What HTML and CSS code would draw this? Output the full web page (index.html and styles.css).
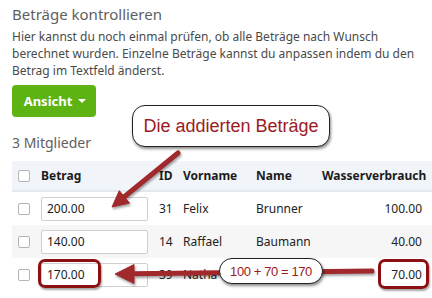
FILE: index.html
```html
<!DOCTYPE html>
<html lang="de">
<head>
    <meta charset="UTF-8">
    <title>Beträge kontrollieren</title>
    <link rel="stylesheet" href="styles.css">
</head>
<body>
    <div class="page">
        <h2 class="title">Beträge kontrollieren</h2>
        <p class="intro">Hier kannst du noch einmal prüfen, ob alle Beträge nach Wunsch berechnet wurden. Einzelne Beträge kannst du anpassen indem du den Betrag im Textfeld änderst.</p>
        <button class="view">Ansicht <span class="caret"></span></button>
        <h3 class="count">3 Mitglieder</h3>

        <table class="members">
            <colgroup>
                <col class="c-check">
                <col class="c-amount">
                <col class="c-id">
                <col class="c-first">
                <col class="c-last">
                <col class="c-water">
            </colgroup>
            <thead>
                <tr>
                    <th><span class="check"></span></th>
                    <th>Betrag</th>
                    <th>ID</th>
                    <th>Vorname</th>
                    <th>Name</th>
                    <th>Wasserverbrauch</th>
                </tr>
            </thead>
            <tbody>
                <tr>
                    <td><span class="check"></span></td>
                    <td><input class="amount" type="text" value="200.00"></td>
                    <td>31</td>
                    <td>Felix</td>
                    <td>Brunner</td>
                    <td class="num">100.00</td>
                </tr>
                <tr>
                    <td><span class="check"></span></td>
                    <td><input class="amount" type="text" value="140.00"></td>
                    <td>14</td>
                    <td>Raffael</td>
                    <td>Baumann</td>
                    <td class="num">40.00</td>
                </tr>
                <tr>
                    <td><span class="check"></span></td>
                    <td><input class="amount" type="text" value="170.00"></td>
                    <td>39</td>
                    <td>Natha</td>
                    <td></td>
                    <td class="num">70.00</td>
                </tr>
            </tbody>
        </table>
    </div>

    <!-- annotations drawn on top of the screenshot -->
    <svg class="arrows" width="432" height="298" viewBox="0 0 432 298">
        <g fill="#a1292b" stroke="#a1292b">
            <line x1="178" y1="153" x2="124" y2="197" stroke-width="5" stroke-linecap="round"/>
            <polygon points="112,207 129.5,203.1 119.3,190.7" stroke-width="1" stroke-linejoin="round"/>
            <line x1="372" y1="271" x2="132" y2="273.8" stroke-width="5" stroke-linecap="round"/>
            <polygon points="115,274 134,264.5 134,283.5" stroke-width="1" stroke-linejoin="round"/>
        </g>
    </svg>
    <div class="mark mark-amount"></div>
    <div class="mark mark-water"></div>
    <div class="bubble bubble-big">Die addierten Beträge</div>
    <div class="bubble bubble-small">100 + 70 = 170</div>
</body>
</html>
```

FILE: styles.css
```css
body {
    margin: 0;
    background: #fff;
    font-family: "Noto Sans", "Open Sans", sans-serif;
    color: #4a4a4a;
}

.page {
    padding: 4px 0 0 12px;
}

.title {
    margin: 0;
    font-size: 15px;
    font-weight: 400;
    line-height: 21px;
    color: #606060;
}

.intro {
    margin: 3px 0 0;
    font-size: 12px;
    line-height: 17px;
    color: #4a4a4a;
}

.view {
    margin-top: 6px;
    width: 84px;
    height: 32px;
    border: none;
    border-radius: 4px;
    background: #5cb312;
    color: #fff;
    font-family: inherit;
    font-size: 13px;
    font-weight: 700;
    padding: 0 0 0 2px;
    display: flex;
    align-items: center;
    justify-content: center;
    gap: 6px;
}

.caret {
    width: 0;
    height: 0;
    border-left: 4px solid transparent;
    border-right: 4px solid transparent;
    border-top: 4px solid #fff;
}

.count {
    margin: 16px 0 0;
    font-size: 14px;
    font-weight: 400;
    line-height: 20px;
    color: #606060;
}

.members {
    margin-top: 8px;
    width: 420px;
    table-layout: fixed;
    border-collapse: collapse;
    font-size: 12px;
    color: #222;
}

.c-check { width: 23px; }
.c-amount { width: 118px; }
.c-id { width: 24px; }
.c-first { width: 73px; }
.c-last { width: 66px; }
.c-water { width: 116px; }

.members th,
.members td {
    padding: 0 6px;
    text-align: left;
    white-space: nowrap;
    overflow: hidden;
}

.members th {
    height: 29px;
    background: #f1f4f8;
    border-bottom: 2px solid #e3e9f1;
    font-weight: 700;
    color: #1c1c1c;
}

.members th:last-child {
    text-align: right;
}

.members td {
    height: 33px;
}

.members tbody tr:nth-child(2) td {
    background: #f6f6f6;
}

.members td.num {
    text-align: right;
    padding-right: 10px;
}

.check {
    display: block;
    width: 10px;
    height: 10px;
    border: 1px solid #b4b4b4;
    border-radius: 2px;
    background: #fff;
}

.amount {
    display: block;
    box-sizing: border-box;
    width: 107px;
    height: 24px;
    padding: 0 5px;
    border: 1px solid #cfcfcf;
    border-radius: 2px;
    background: #fff;
    font-family: inherit;
    font-size: 12px;
    color: #1c1c1c;
}

.arrows {
    position: absolute;
    top: 0;
    left: 0;
    pointer-events: none;
    filter: drop-shadow(1px 2px 1px rgba(0, 0, 0, 0.35));
}

.mark {
    position: absolute;
    box-sizing: border-box;
    border: 3px solid #8c0f12;
    border-radius: 7px;
    box-shadow: 1px 2px 2px rgba(0, 0, 0, 0.35);
}

.mark-amount {
    left: 38px;
    top: 259px;
    width: 63px;
    height: 29px;
}

.mark-water {
    left: 378px;
    top: 259px;
    width: 51px;
    height: 30px;
}

.bubble {
    position: absolute;
    box-sizing: border-box;
    display: flex;
    align-items: center;
    justify-content: center;
    background: #fff;
    border: 1px solid #222;
    font-family: "Liberation Sans", Arial, sans-serif;
    color: #9b1b1e;
    box-shadow: 1px 2px 3px rgba(0, 0, 0, 0.45);
}

.bubble-big {
    left: 132px;
    top: 105px;
    width: 198px;
    height: 42px;
    border-radius: 13px;
    font-size: 18px;
}

.bubble-small {
    left: 219px;
    top: 258px;
    width: 104px;
    height: 26px;
    border-radius: 13px;
    font-size: 13px;
    letter-spacing: -0.4px;
}
```
